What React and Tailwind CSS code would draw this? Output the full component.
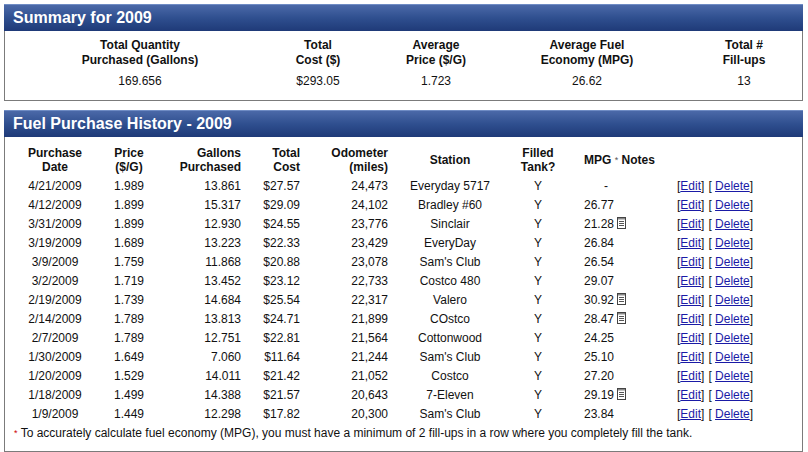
import React from 'react';

const rows = [
    ['4/21/2009', '1.989', '13.861', '$27.57', '24,473', 'Everyday 5717', 'Y', '-', false],
    ['4/12/2009', '1.899', '15.317', '$29.09', '24,102', 'Bradley #60', 'Y', '26.77', false],
    ['3/31/2009', '1.899', '12.930', '$24.55', '23,776', 'Sinclair', 'Y', '21.28', true],
    ['3/19/2009', '1.689', '13.223', '$22.33', '23,429', 'EveryDay', 'Y', '26.84', false],
    ['3/9/2009', '1.759', '11.868', '$20.88', '23,078', "Sam's Club", 'Y', '26.54', false],
    ['3/2/2009', '1.719', '13.452', '$23.12', '22,733', 'Costco 480', 'Y', '29.07', false],
    ['2/19/2009', '1.739', '14.684', '$25.54', '22,317', 'Valero', 'Y', '30.92', true],
    ['2/14/2009', '1.789', '13.813', '$24.71', '21,899', 'COstco', 'Y', '28.47', true],
    ['2/7/2009', '1.789', '12.751', '$22.81', '21,564', 'Cottonwood', 'Y', '24.25', false],
    ['1/30/2009', '1.649', '7.060', '$11.64', '21,244', "Sam's Club", 'Y', '25.10', false],
    ['1/20/2009', '1.529', '14.011', '$21.42', '21,052', 'Costco', 'Y', '27.20', false],
    ['1/18/2009', '1.499', '14.388', '$21.57', '20,643', '7-Eleven', 'Y', '29.19', true],
    ['1/9/2009', '1.449', '12.298', '$17.82', '20,300', "Sam's Club", 'Y', '23.84', false],
];

// little notepad shown next to an MPG value when the fill-up has notes
const NoteIcon = () => (
    <svg width="9" height="12" viewBox="0 0 9 12" className="inline-block ml-[3px] -mt-[3px] align-middle">
        <rect x="0.5" y="0.5" width="8" height="11" fill="#fff" stroke="#444" />
        <rect x="1" y="1" width="7" height="1.5" fill="#888" />
        <line x1="2" y1="4.5" x2="7" y2="4.5" stroke="#555" />
        <line x1="2" y1="6.5" x2="7" y2="6.5" stroke="#555" />
        <line x1="2" y1="8.5" x2="7" y2="8.5" stroke="#555" />
    </svg>
);

const PanelHeader = ({ title }) => (
    <div className="h-[27px] flex items-center pl-[9px] bg-gradient-to-b from-[#4b69a8] via-[#2f4f8f] to-[#1f3a78] border-t border-[#6f8cc4] text-white font-bold text-[16px]">
        {title}
    </div>
);

const summary = [
    ['Total Quantity', 'Purchased (Gallons)', '169.656', 'w-[200px]'],
    ['Total', 'Cost ($)', '$293.05', 'w-[156px]'],
    ['Average', 'Price ($/G)', '1.723', 'w-[80px]'],
    ['Average Fuel', 'Economy (MPG)', '26.62', 'w-[222px]'],
    ['Total #', 'Fill-ups', '13', 'w-[92px]'],
];

const App = () => {
    return (
        <div className="w-[808px] h-[452px] bg-white pt-[4px] pl-[4px] pr-[5px] text-[12px] text-[#111]" style={{ fontFamily: '"Liberation Sans", Arial, sans-serif' }}>
            <div>
                <PanelHeader title="Summary for 2009" />
                <div className="border-x border-b border-[#7b7b7b] pt-[7px] pb-[11px] pl-[35px] flex">
                    {summary.map(([a, b, v, w]) => (
                        <div key={a} className={`${w} text-center leading-[15px]`}>
                            <div className="font-bold">{a}</div>
                            <div className="font-bold">{b}</div>
                            <div className="mt-[6px]">{v}</div>
                        </div>
                    ))}
                </div>
            </div>

            <div className="mt-[9px]">
                <PanelHeader title="Fuel Purchase History - 2009" />
                <div className="border-x border-b border-[#7b7b7b] pb-[8px]">
                    <table className="table-fixed border-collapse w-[796px]">
                        <colgroup>
                            <col className="w-[100px]" />
                            <col className="w-[48px]" />
                            <col className="w-[92px]" />
                            <col className="w-[59px]" />
                            <col className="w-[88px]" />
                            <col className="w-[116px]" />
                            <col className="w-[60px]" />
                            <col className="w-[103px]" />
                            <col className="w-[130px]" />
                        </colgroup>
                        <thead>
                            <tr className="font-bold leading-[14px] align-middle">
                                <th className="pt-[9px] pb-[3px] text-center">Purchase<br />Date</th>
                                <th className="pt-[9px] pb-[3px] text-center">Price<br />($/G)</th>
                                <th className="pt-[9px] pb-[3px] text-right pr-[4px]">Gallons<br />Purchased</th>
                                <th className="pt-[9px] pb-[3px] text-right pr-[4px]">Total<br />Cost</th>
                                <th className="pt-[9px] pb-[3px] text-right pr-[4px]">Odometer<br />(miles)</th>
                                <th className="pt-[9px] pb-[3px] text-center">Station</th>
                                <th className="pt-[9px] pb-[3px] text-center">Filled<br />Tank?</th>
                                <th className="pt-[9px] pb-[3px] text-left pl-[16px] whitespace-nowrap">MPG <span className="text-[#555] font-normal text-[9px] align-top">*</span> Notes</th>
                                <th></th>
                            </tr>
                        </thead>
                        <tbody>
                            {rows.map(([date, price, gal, cost, odo, station, filled, mpg, note]) => (
                                <tr key={date + odo} className="h-[19px] leading-[19px]">
                                    <td className="text-center">{date}</td>
                                    <td className="text-center">{price}</td>
                                    <td className="text-right pr-[4px]">{gal}</td>
                                    <td className="text-right pr-[4px]">{cost}</td>
                                    <td className="text-right pr-[4px]">{odo}</td>
                                    <td className="text-center">{station}</td>
                                    <td className="text-center">{filled}</td>
                                    <td className={mpg === '-' ? 'pl-[36px]' : 'pl-[16px]'}>
                                        {mpg}
                                        {note && <NoteIcon />}
                                    </td>
                                    <td className="pl-[6px] whitespace-nowrap">
                                        [<a href="#" className="text-[#1a1aa6] underline">Edit</a>]
                                        <span className="ml-[4px]">[ <a href="#" className="text-[#1a1aa6] underline">Delete</a>]</span>
                                    </td>
                                </tr>
                            ))}
                        </tbody>
                    </table>
                    <div className="leading-[19px] pl-[9px]">
                        <span className="text-[#c00] text-[9px] align-top">*</span> To accurately calculate fuel economy (MPG), you must have a minimum of 2 fill-ups in a row where you completely fill the tank.
                    </div>
                </div>
            </div>
        </div>
    );
};

export default App;
